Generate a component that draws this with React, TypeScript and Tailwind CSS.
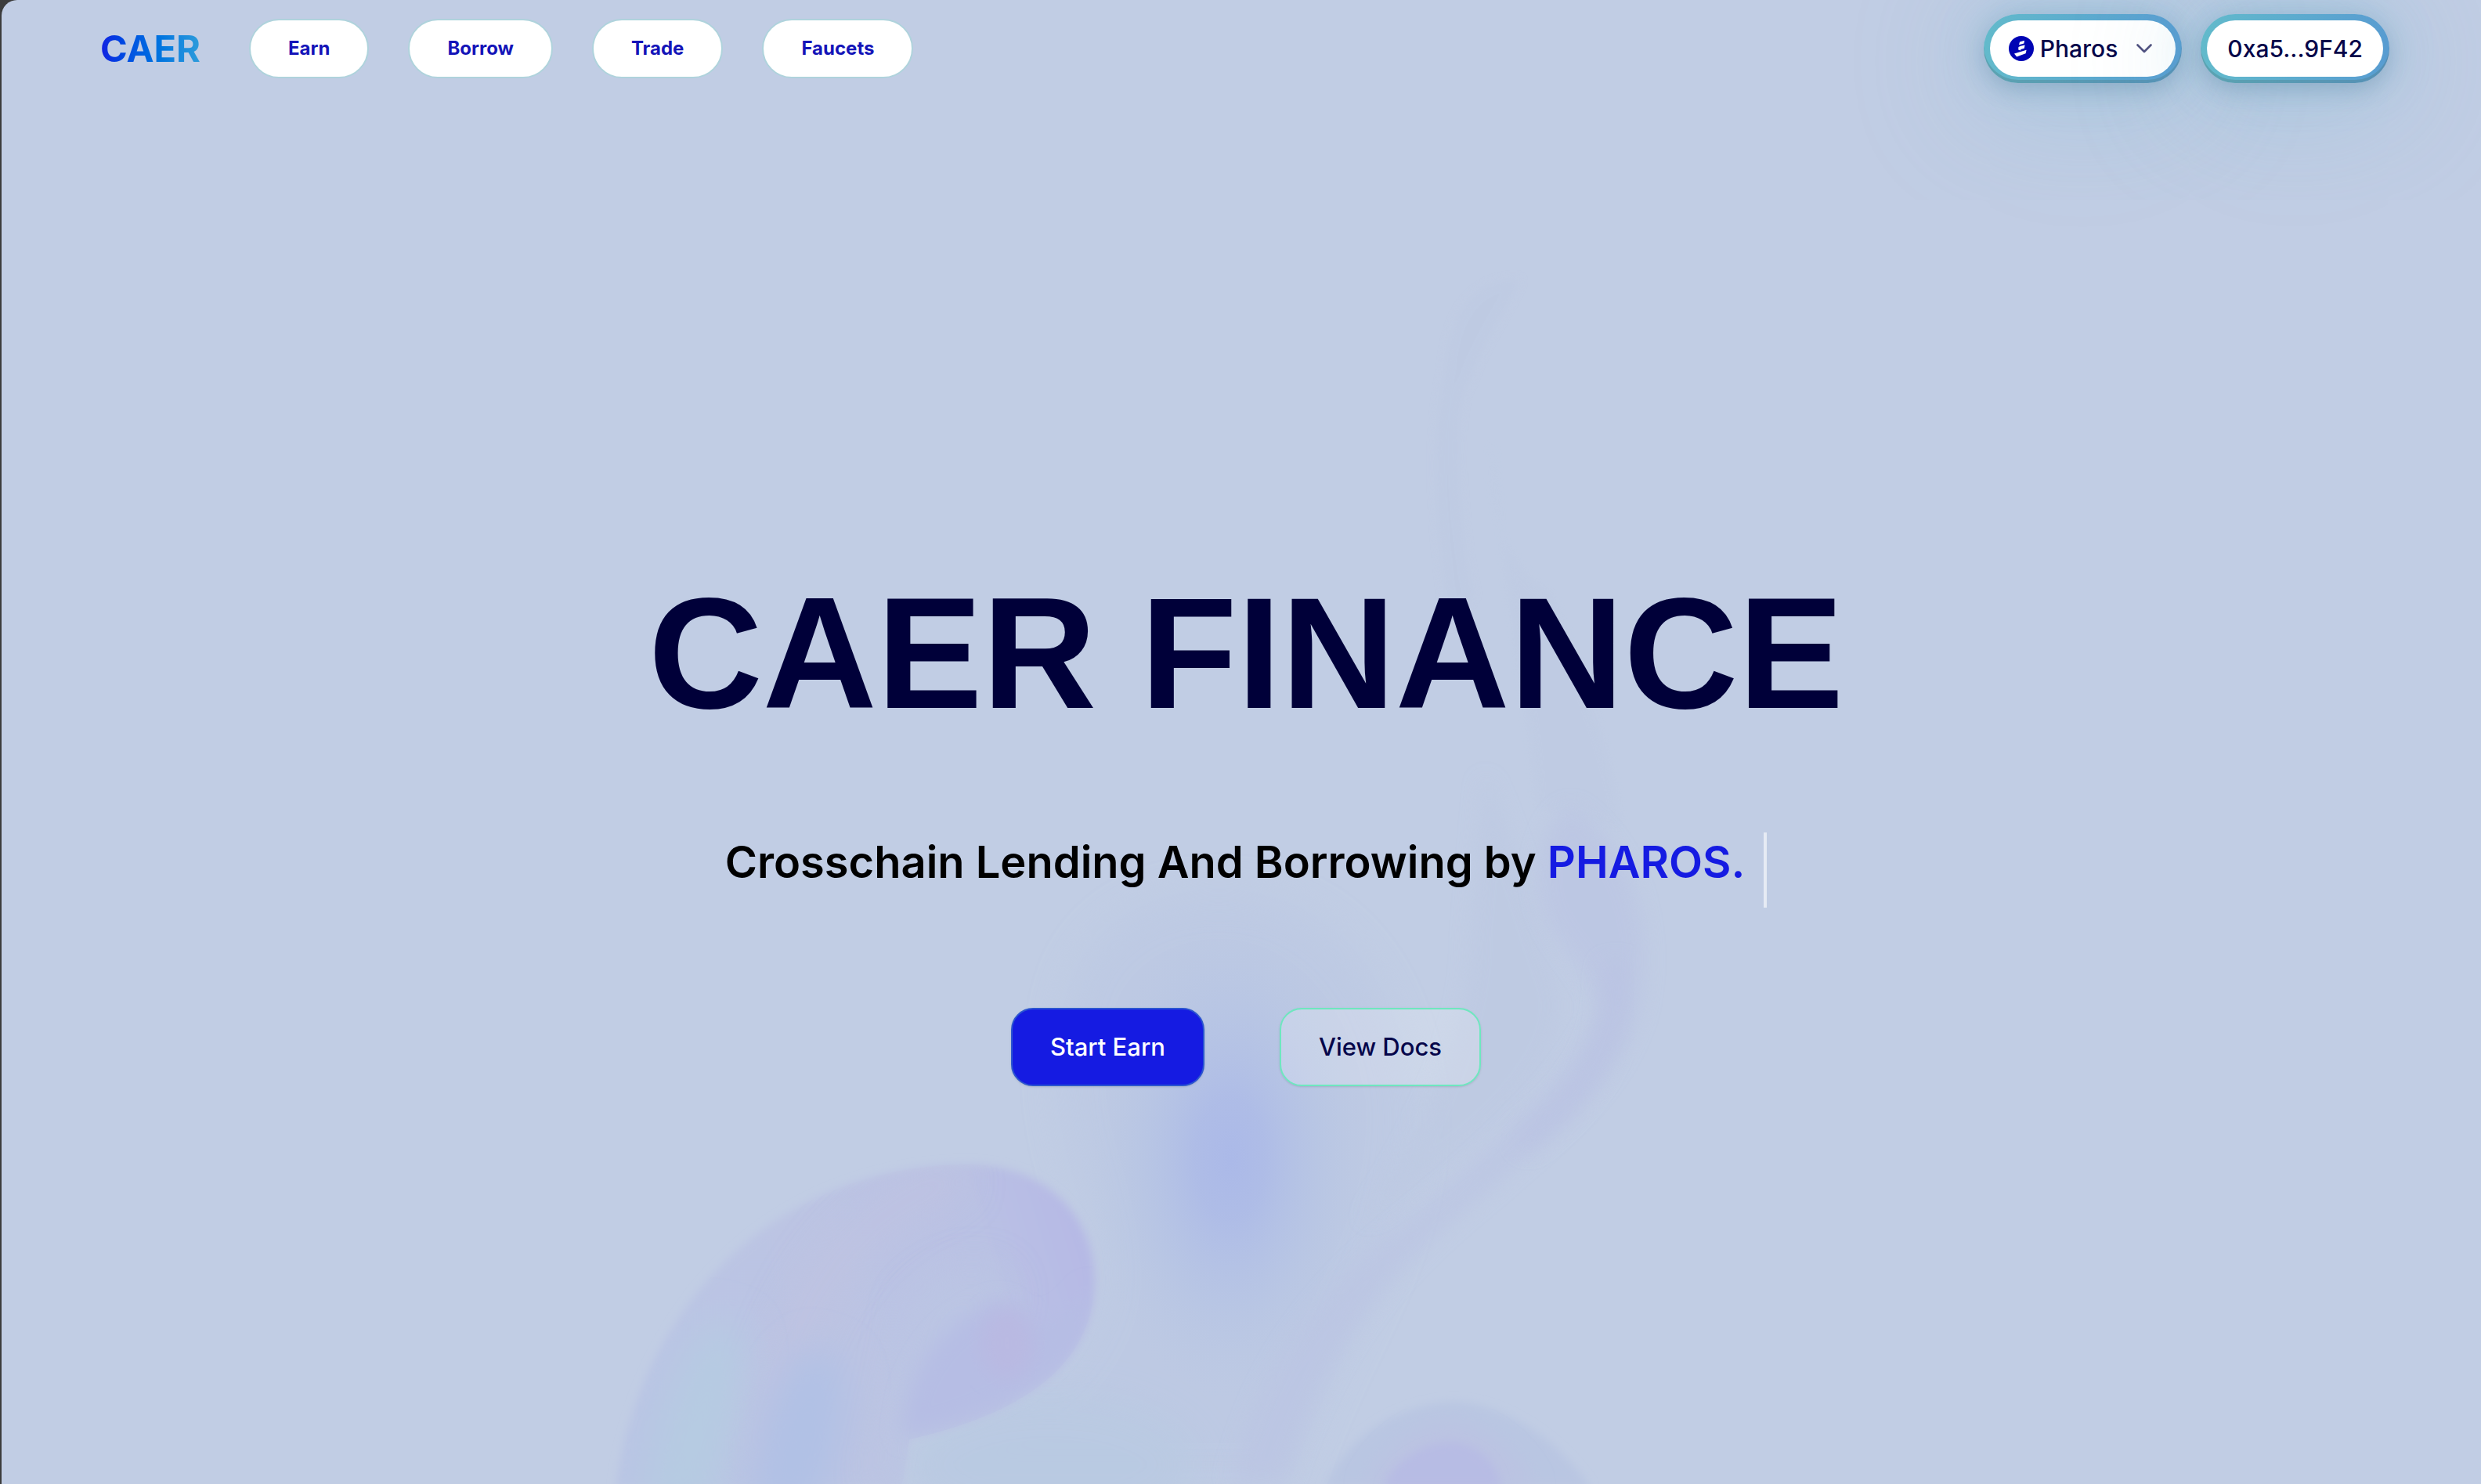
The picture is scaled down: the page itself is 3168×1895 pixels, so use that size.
import React from "react";

const navItems = ["Earn", "Borrow", "Trade", "Faucets"];

function FluidBackground() {
  return (
    <svg
      aria-hidden="true"
      className="pointer-events-none absolute inset-0 h-full w-full"
      viewBox="0 0 3168 1895"
      preserveAspectRatio="xMidYMax slice"
    >
      <defs>
        <filter id="soft6" x="-20%" y="-20%" width="140%" height="140%">
          <feGaussianBlur stdDeviation="6" />
        </filter>
        <filter id="soft12" x="-20%" y="-20%" width="140%" height="140%">
          <feGaussianBlur stdDeviation="13" />
        </filter>
        <filter id="soft24" x="-40%" y="-40%" width="180%" height="180%">
          <feGaussianBlur stdDeviation="24" />
        </filter>
        <radialGradient id="core">
          <stop offset="0" stopColor="#abb9e8" stopOpacity="1" />
          <stop offset="0.25" stopColor="#adbbe7" stopOpacity="0.9" />
          <stop offset="0.6" stopColor="#b3c2e5" stopOpacity="0.55" />
          <stop offset="1" stopColor="#b9c8e3" stopOpacity="0" />
        </radialGradient>
        <linearGradient id="petal" x1="0" y1="0.6" x2="1" y2="0.4">
          <stop offset="0" stopColor="#b9c5e4" />
          <stop offset="0.45" stopColor="#bcc4e3" />
          <stop offset="0.8" stopColor="#bac2e4" />
          <stop offset="1" stopColor="#b6b9e5" />
        </linearGradient>
        <clipPath id="petalClip">
          <path d="M786 1900C800 1780 860 1660 960 1580C1050 1510 1150 1486 1240 1487C1350 1490 1404 1570 1396 1650C1388 1730 1330 1800 1160 1838L1150 1900Z" />
        </clipPath>
      </defs>

      <path
        d="M1360 1300C1370 1200 1450 1140 1560 1140C1700 1145 1780 1250 1800 1400C1810 1600 1700 1700 1640 1900L1150 1900C1180 1840 1380 1780 1400 1640C1400 1520 1330 1450 1360 1300Z"
        fill="#bbc8e3"
        opacity="0.6"
        filter="url(#soft24)"
      />
      <ellipse cx="1570" cy="1480" rx="180" ry="310" fill="url(#core)" />
      <ellipse cx="1340" cy="1870" rx="190" ry="90" fill="#b9cae2" opacity="0.8" filter="url(#soft24)" />

      <g fill="#bdc9e2">
        <path d="M1940 357C1880 356 1850 400 1845 470C1826 560 1830 650 1850 800L1880 760C1856 650 1856 500 1874 490C1890 440 1920 400 1940 357Z" opacity="0.5" filter="url(#soft6)" />
        <path d="M1904 560C1900 700 1940 730 1980 760C2010 850 2060 960 2070 1060L1960 1030C1960 940 1925 800 1904 560Z" opacity="0.4" filter="url(#soft6)" />
        <path d="M1894 990C1930 1060 1960 1180 1990 1260C2010 1360 1900 1460 1740 1560C1820 1440 1880 1300 1876 1200Z" opacity="0.7" filter="url(#soft12)" />
      </g>
      <path
        d="M2006 1030C2080 1080 2115 1180 2092 1290C2060 1390 1990 1440 1900 1520C1790 1610 1700 1700 1640 1895L1570 1895C1600 1780 1650 1680 1770 1580C1880 1490 2010 1380 2040 1290C2030 1230 1966 1200 1964 1130C1962 1080 1980 1040 2006 1030Z"
        fill="#bbc5e3"
        opacity="0.7"
        filter="url(#soft12)"
      />
      <path d="M2060 1230C2070 1340 2010 1410 1940 1460" fill="none" stroke="#bac2e3" strokeWidth="30" opacity="0.6" filter="url(#soft12)" />

      <path
        d="M786 1900C800 1780 860 1660 960 1580C1050 1510 1150 1486 1240 1487C1350 1490 1404 1570 1396 1650C1388 1730 1330 1800 1160 1838L1150 1900Z"
        fill="url(#petal)"
        filter="url(#soft6)"
      />
      <g clipPath="url(#petalClip)">
        <path d="M1230 1500C1100 1540 1010 1640 960 1880" fill="none" stroke="#bfc2e1" strokeWidth="50" opacity="0.7" filter="url(#soft24)" />
        <path d="M1160 1660C1220 1600 1290 1600 1290 1660L1180 1900L1110 1900Z" fill="#bbc6e3" opacity="0.7" filter="url(#soft24)" />
        <ellipse cx="885" cy="1840" rx="48" ry="160" fill="#b6cbe2" transform="rotate(16 885 1840)" filter="url(#soft24)" />
        <ellipse cx="1020" cy="1840" rx="52" ry="120" fill="#b1c1e5" transform="rotate(16 1020 1840)" filter="url(#soft24)" />
        <path d="M1152 1836C1150 1760 1200 1680 1280 1662C1310 1700 1350 1700 1392 1640C1390 1740 1310 1800 1152 1836Z" fill="#b6bde4" filter="url(#soft12)" />
        <ellipse cx="1285" cy="1715" rx="34" ry="46" fill="#b9b9e2" filter="url(#soft12)" />
      </g>

      <path d="M1690 1900C1720 1830 1790 1792 1856 1790C1920 1792 1990 1840 2030 1900Z" fill="#b9c6e2" filter="url(#soft6)" />
      <path d="M1740 1900C1770 1840 1820 1815 1850 1816C1900 1820 1940 1860 1960 1900Z" fill="#bbc3e2" filter="url(#soft12)" />
      <path d="M1764 1900C1784 1856 1830 1840 1856 1842C1890 1846 1912 1870 1916 1900Z" fill="#b7bce4" filter="url(#soft6)" />
    </svg>
  );
}

function PharosMark() {
  return (
    <svg aria-hidden="true" viewBox="0 0 32 32" className="size-8 shrink-0">
      <circle cx="16" cy="16" r="16" fill="#0004b4" />
      <path d="M14 7.5L20 5.8L19.4 9.6L13 11.2Z" fill="#fff" />
      <path d="M12.4 14L15.2 12.8L20.6 11.4L19.8 15.8L15.4 17L15 18.4L12.2 17.4Z" fill="#fff" />
      <path d="M7 22.6L22.6 17.8L21.6 22.2L10.2 26.6Z" fill="#fff" />
    </svg>
  );
}

const pill =
  "flex h-22 items-center rounded-full bg-linear-to-r from-[#62bacb] to-[#589cd1] p-2 shadow-[inset_0_-4px_0_rgba(80,120,130,0.35),0_8px_28px_rgba(60,100,130,0.25),0_0_60px_rgba(110,185,215,0.3),0_16px_160px_20px_rgba(110,185,210,0.28)]";

export default function App() {
  return (
    <div className="min-h-screen bg-[#3c3c3c] pl-[2px] font-['Inter','Liberation_Sans',sans-serif]">
      <div className="relative flex min-h-screen flex-col overflow-hidden rounded-tl-[20px] bg-[#c1cde4]">
        <FluidBackground />

        <header className="relative flex items-center justify-between pt-[18px] pr-[117px] pl-[126px]">
          <div className="flex items-center gap-[62px]">
            <a
              href="#home"
              className="bg-linear-to-r from-[#141be2] to-[#2d9cdb] bg-clip-text text-[47px] leading-[60px] font-bold text-transparent"
            >
              CAER
            </a>
            <nav className="flex items-center gap-[50px]">
              {navItems.map((item) => (
                <a
                  key={item}
                  href={"#" + item.toLowerCase()}
                  className="flex h-[76px] items-center rounded-full border-2 border-[#afd3dc] bg-white px-12 text-2xl font-bold text-[#1414b8]"
                >
                  {item}
                </a>
              ))}
            </nav>
          </div>

          <div className="flex items-center gap-6">
            <button type="button" className={pill}>
              <span className="flex h-18 items-center rounded-full bg-white px-6 text-[30px] font-medium text-[#06064a]">
                <PharosMark />
                <span className="ml-2">Pharos</span>
                <svg aria-hidden="true" viewBox="0 0 20 12" className="mr-[6px] ml-6 h-3 w-5">
                  <path d="M1.5 1.5L10 10L18.5 1.5" fill="none" stroke="#50507e" strokeWidth="2.6" strokeLinecap="round" strokeLinejoin="round" />
                </svg>
              </span>
            </button>
            <button type="button" className={pill}>
              <span className="flex h-18 items-center rounded-full bg-white px-[26px] text-[30px] font-medium text-[#06064a]">
                0xa5...9F42
              </span>
            </button>
          </div>
        </header>

        <main className="relative flex flex-col items-center pt-[624px] pl-3 text-center">
          <h1 className="font-['Liberation_Sans',Arial,sans-serif] text-[202px] leading-[208px] font-bold text-[#000039]">
            CAER FINANCE
          </h1>
          <p className="mt-[125px] border-r-4 border-white/60 pr-6 pb-5 text-[56px] leading-[76px] font-semibold text-black">
            Crosschain Lending And Borrowing by <span className="text-[#151be2]">PHAROS.</span>
          </p>
          <div className="mt-32 flex gap-24">
            <button
              type="button"
              className="h-[100px] rounded-[28px] border-2 border-[#2b55d0] bg-[#151be2] px-12 text-[31px] font-medium text-white shadow-sm"
            >
              Start Earn
            </button>
            <button
              type="button"
              className="h-[100px] rounded-[28px] border-2 border-[#6ee7bf] bg-white/20 px-12 text-[31px] font-medium text-[#06064a] shadow-sm"
            >
              View Docs
            </button>
          </div>
        </main>
      </div>
    </div>
  );
}
